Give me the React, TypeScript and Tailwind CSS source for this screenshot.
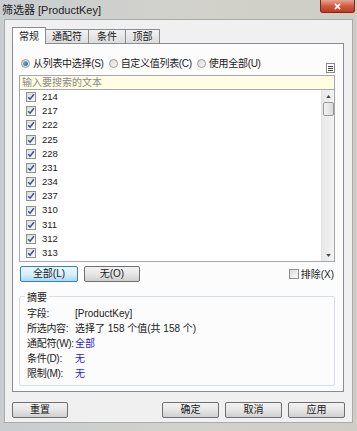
import clsx from "clsx";

const FONT = { fontFamily: '"Liberation Sans", "Noto Sans CJK SC", sans-serif' };

// last row is scrolled half out of view, only the top of its box shows
const values = ["214", "217", "222", "225", "228", "231", "234", "237", "310", "311", "312", "313", ""];

const summary: { label: string; value: string; blue?: boolean }[] = [
  { label: "字段:", value: "[ProductKey]" },
  { label: "所选内容:", value: "选择了 158 个值(共 158 个)" },
  { label: "通配符(W):", value: "全部", blue: true },
  { label: "条件(D):", value: "无", blue: true },
  { label: "限制(M):", value: "无", blue: true },
];

function Check({ on }: { on: boolean }) {
  return (
    <span className="flex size-[10px] shrink-0 items-center justify-center border border-[#8e8f8f] bg-gradient-to-br from-[#dcdcdc] to-[#fbfbfb]">
      {on && (
        <svg viewBox="0 0 8 8" className="size-[8px]">
          <path d="M1.2 4.2 L3.1 6.2 L6.9 1.2" fill="none" stroke="#3c4f8c" strokeWidth="1.5" />
        </svg>
      )}
    </span>
  );
}

function Radio({ on, label }: { on: boolean; label: string }) {
  return (
    <span className="flex items-center gap-[3px]">
      <span className="flex size-[9px] items-center justify-center rounded-full border border-[#9a9a9a] bg-gradient-to-br from-[#d9d9d9] to-[#fafafa]">
        {on && <span className="size-[5px] rounded-full bg-gradient-to-br from-[#8db7e8] to-[#2a5fa8]" />}
      </span>
      <span className="tracking-[-0.3px]">{label}</span>
    </span>
  );
}

function Btn({ label, w, focus }: { label: string; w: string; focus?: boolean }) {
  return (
    <button
      className={clsx(
        "flex h-[16px] items-center justify-center whitespace-nowrap rounded-[2px] border text-[10px] leading-[12px]",
        w,
        focus
          ? "border-[#3c7fb1] bg-gradient-to-b from-[#eaf6fd] via-[#d9f0fc] to-[#a7d9f5]"
          : "border-[#707070] bg-gradient-to-b from-[#f2f2f2] via-[#e6e6e6] to-[#cfcfcf]",
      )}
    >
      {label}
    </button>
  );
}

export default function App() {
  return (
    <div
      style={FONT}
      className="flex h-[431px] w-[357px] flex-col overflow-hidden bg-gradient-to-r from-[#c9cdd0] via-[#d2d2cc] to-[#cfcdc4] text-[10px] text-[#1a1a1a]"
    >
      {/* title bar */}
      <div className="flex h-[19px] shrink-0 items-start justify-between">
        <span className="pl-[2px] pt-[2px] text-[11px] text-[#222]">筛选器 [ProductKey]</span>
        <span className="mr-[2px] flex h-[13px] w-[35px] items-center justify-center rounded-b-[3px] border border-t-0 border-[#7a2a1c] bg-gradient-to-b from-[#e6a291] via-[#d05a40] to-[#c13a20]">
          <svg viewBox="0 0 8 8" className="size-[7px]">
            <path d="M1 1 L7 7 M7 1 L1 7" stroke="white" strokeWidth="1.8" />
          </svg>
        </span>
      </div>

      {/* dialog body */}
      <div className="mx-[4px] mb-[8px] flex flex-1 flex-col border border-[#a7abb0] bg-[#f0f0f0] pl-[7px] pr-[7px] pt-[7px]">
        {/* tabs */}
        <div className="flex h-[16px] items-end">
          <div className="relative z-10 -mb-px flex h-[17px] w-[34px] items-center justify-center border border-b-0 border-[#898c95] bg-white">
            常规
          </div>
          {["通配符", "条件", "顶部"].map((t, i) => (
            <div
              key={t}
              className={clsx(
                "flex h-[14px] items-center justify-center border border-b-0 border-l-0 border-[#898c95] bg-gradient-to-b from-[#f2f2f2] to-[#dcdcdc]",
                i === 0 ? "w-[43px]" : i === 1 ? "w-[37px]" : "w-[34px]",
              )}
            >
              {t}
            </div>
          ))}
        </div>

        {/* tab panel */}
        <div className="flex w-[332px] flex-col border border-[#898c95] bg-[#fcfcfc] px-[6px] pb-[5px]">
          <div className="flex h-[31px] items-start pt-[12px] pl-[2px]">
            <div className="flex items-center gap-[5px]">
              <Radio on label="从列表中选择(S)" />
              <Radio on={false} label="自定义值列表(C)" />
              <Radio on={false} label="使用全部(U)" />
            </div>
            <span className="ml-auto mr-[2px] mt-[7px] flex h-[10px] w-[9px] flex-col items-center justify-center gap-[1px] border border-[#8a8a8a] bg-white">
              <span className="h-px w-[5px] bg-[#444]" />
              <span className="h-px w-[5px] bg-[#444]" />
              <span className="h-px w-[5px] bg-[#444]" />
            </span>
          </div>

          {/* search + list */}
          <div className="w-[316px] border border-[#a4a9af] bg-white">
            <div className="flex h-[14px] items-center border-b border-[#a9a9a9] bg-[#fffde3] pl-[2px] text-[#8a8a8a]">
              输入要搜索的文本
            </div>
            <div className="flex h-[171px] overflow-hidden">
              <div className="flex flex-1 flex-col overflow-hidden pl-[6px]">
                {values.map((v, i) => (
                  <div key={i} className="flex h-[14.2px] shrink-0 items-center gap-[6px]">
                    <Check on />
                    {v && <span className="text-[9.5px]">{v}</span>}
                  </div>
                ))}
              </div>
              <div className="flex w-[13px] flex-col items-center border-l border-[#e3e3e3] bg-gradient-to-r from-[#e8e8e8] to-[#f3f3f3]">
                <span className="flex h-[12px] w-full items-center justify-center">
                  <svg viewBox="0 0 6 4" className="h-[3px] w-[5px]">
                    <path d="M0 4 L3 0 L6 4 Z" fill="#444" />
                  </svg>
                </span>
                <span className="h-[14px] w-[11px] rounded-[2px] border border-[#9a9a9a] bg-gradient-to-r from-[#f4f4f4] to-[#dadada]" />
                <span className="mt-auto flex h-[12px] w-full items-center justify-center">
                  <svg viewBox="0 0 6 4" className="h-[3px] w-[5px]">
                    <path d="M0 0 L3 4 L6 0 Z" fill="#444" />
                  </svg>
                </span>
              </div>
            </div>
          </div>

          {/* select buttons */}
          <div className="mt-[4px] flex items-center pl-[1px]">
            <Btn w="w-[58px]" focus label="全部(L)" />
            <span className="ml-[6px]">
              <Btn w="w-[56px]" label="无(O)" />
            </span>
            <span className="ml-auto mr-[3px] flex items-center gap-[2px]">
              <Check on={false} />
              <span>排除(X)</span>
            </span>
          </div>

          {/* summary */}
          <div className="relative mt-[14px] w-[316px] rounded-[2px] border border-[#d5dfe5] px-[7px] pb-[4px] pt-[9px]">
            <span className="absolute -top-[7px] left-[5px] bg-[#fcfcfc] px-[2px]">摘要</span>
            {summary.map((s) => (
              <div key={s.label} className="flex h-[15px] items-center whitespace-nowrap">
                <span className="w-[48px] shrink-0 tracking-[-0.3px]">{s.label}</span>
                <span className={clsx(s.blue && "text-[#1c1ce0]")}>{s.value}</span>
              </div>
            ))}
          </div>
        </div>

        {/* dialog buttons */}
        <div className="mt-[10px] flex items-center">
          <Btn w="w-[56px]" label="重置" />
          <span className="ml-auto flex gap-[6px]">
            <Btn w="w-[57px]" label="确定" />
            <Btn w="w-[57px]" label="取消" />
            <Btn w="w-[57px]" label="应用" />
          </span>
        </div>
      </div>
    </div>
  );
}
